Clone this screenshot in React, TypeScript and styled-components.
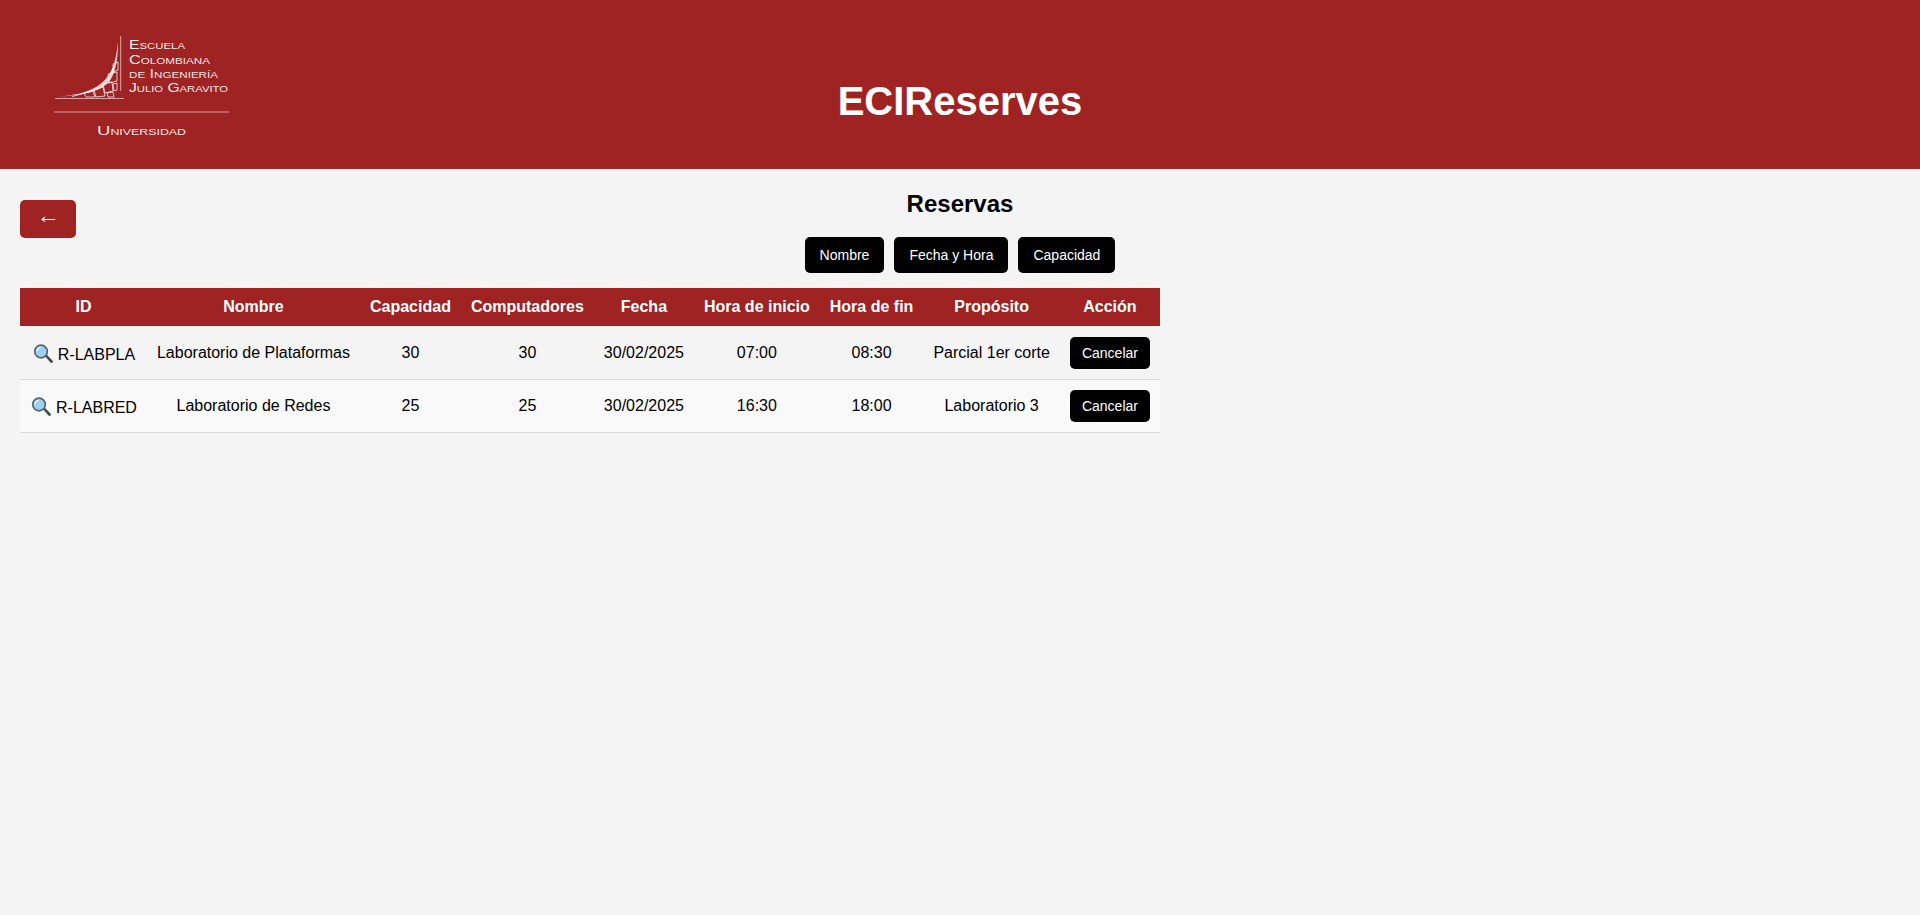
import React from "react";
import styled, { createGlobalStyle } from "styled-components";

const Global = createGlobalStyle`
  html, body { margin: 0; padding: 0; }
  body { background: #f4f4f4; color: #000; font-family: "Liberation Sans", Arial, sans-serif; min-height: 915px; }
`;

const Header = styled.header`
  background: #a02323;
  height: 169px;
  box-sizing: border-box;
  padding: 20px 30px 19px;
  display: grid;
  grid-template-columns: 1fr auto 1fr;
  color: #fff;
`;
const LogoSvg = styled.svg`
  display: block;
  width: 220px;
  height: 130px;
`;
const Brand = styled.h1`
  margin: 58px 0 0;
  font-size: 40px;
  line-height: 46px;
  font-weight: 700;
  color: #fff;
  align-self: start;
`;
const Main = styled.main`
  padding: 21px 20px 0;
`;
const Top = styled.div`
  display: grid;
  grid-template-columns: 1fr auto 1fr;
  align-items: start;
`;
const BackButton = styled.button`
  justify-self: start;
  margin-top: 10px;
  width: 56px;
  height: 38px;
  padding: 0 0 7px;
  background: #a02323;
  color: #fff;
  border: 0;
  border-radius: 5px;
  font: 23px "Liberation Sans", Arial, sans-serif;
`;
const Center = styled.div`
  display: flex;
  flex-direction: column;
  align-items: center;
`;
const Title = styled.h2`
  margin: 0;
  font-size: 24px;
  line-height: 27px;
  font-weight: 700;
`;
const Filters = styled.div`
  display: flex;
  gap: 10px;
  margin-top: 20px;
`;
const BlackButton = styled.button<{ $small?: boolean }>`
  background: #000;
  color: #fff;
  border: 0;
  border-radius: 5px;
  font: 14px "Liberation Sans", Arial, sans-serif;
  height: ${(p) => (p.$small ? 32 : 36)}px;
  padding: 0 ${(p) => (p.$small ? 12 : 15)}px;
  vertical-align: middle;
`;
const Table = styled.table`
  width: 1140px;
  margin-top: 15px;
  border-collapse: collapse;
  font-size: 16px;
`;
const Th = styled.th`
  background: #a02323;
  color: #fff;
  font-weight: 700;
  padding: 10px;
  line-height: 18px;
  text-align: center;
`;
const Td = styled.td`
  padding: 10px;
  height: 32px;
  text-align: center;
  border-bottom: 1px solid #ddd;
  line-height: 18px;
`;
const Tr = styled.tr`
  &:nth-child(even) { background: #f9f9f9; }
  &:first-child ${Td} { padding-top: 11px; }
`;
const Lens = styled.svg`
  width: 21px;
  height: 21px;
  vertical-align: -4px;
  margin-right: 5px;
`;

const Logo = () => (
  <LogoSvg viewBox="30 20 220 130" aria-label="Logo Escuela Colombiana de Ingeniería Julio Garavito">
    <g stroke="#fff" fill="none">
      <path d="M120.7 36V91" strokeOpacity=".6" strokeWidth="1" />
      <path d="M55 98.5H124" strokeOpacity=".6" strokeWidth="1" />
      <path d="M54 112H229" strokeOpacity=".55" strokeWidth="1" />
      <path d="M60 96.5C88 94 104 87 111 72C115 63 117 52 118 42C118 58 116 70 111 79C103 91 86 95 60 96.5Z" fill="#fff" fillOpacity=".8" stroke="none" />
      <g strokeWidth="1" strokeOpacity=".72">
        <path d="M72 96.5C92 92 106 84 113 68" />
        <path d="M113 64L118 62L118 70L113 72Z" />
        <path d="M108 74L117 72L117 81L109 83Z" />
        <path d="M103 84L112 82L113 91L105 93Z" />
        <path d="M94 90L103 87L105 96L96 97Z" />
        <path d="M84 93L93 91L95 97L86 97Z" />
        <path d="M113 84L117 83L117 90L114 91Z" />
        <path d="M107 93L113 92L114 97L108 97Z" />
      </g>
    </g>
    <g fill="#fff" fillOpacity=".92" fontFamily="'Liberation Sans', Arial, sans-serif" fontSize="12.5" style={{ fontVariant: "small-caps" }}>
      <text x="129" y="49" textLength="56" lengthAdjust="spacingAndGlyphs">Escuela</text>
      <text x="129" y="64" textLength="81" lengthAdjust="spacingAndGlyphs">Colombiana</text>
      <text x="129" y="78" textLength="89" lengthAdjust="spacingAndGlyphs">de Ingeniería</text>
      <text x="129" y="92" textLength="99" lengthAdjust="spacingAndGlyphs">Julio Garavito</text>
      <text x="97" y="135" textLength="89" lengthAdjust="spacingAndGlyphs" fontSize="13.5">Universidad</text>
    </g>
  </LogoSvg>
);

const Magnifier = () => (
  <Lens viewBox="-1 -0.5 20 20" aria-hidden="true">
    <path d="M11.5 12l1.6-1.4 5.4 5.5c.6.6.6 1.4 0 2-.6.5-1.3.5-1.9 0z" fill="#3f4a50" />
    <circle cx="7.6" cy="7.6" r="6" fill="#9fd0f2" stroke="#56646c" strokeWidth="1.6" />
    <path d="M3.8 7.4a3.8 3.8 0 0 1 3.6-3.6" fill="none" stroke="#e4f4fe" strokeWidth="1.4" />
  </Lens>
);

const rows = [
  ["R-LABPLA", "Laboratorio de Plataformas", "30", "30", "30/02/2025", "07:00", "08:30", "Parcial 1er corte"],
  ["R-LABRED", "Laboratorio de Redes", "25", "25", "30/02/2025", "16:30", "18:00", "Laboratorio 3"],
];
const heads = ["ID", "Nombre", "Capacidad", "Computadores", "Fecha", "Hora de inicio", "Hora de fin", "Propósito", "Acción"];

export default function App() {
  return (
    <>
      <Global />
      <Header>
        <Logo />
        <Brand>ECIReserves</Brand>
      </Header>
      <Main>
        <Top>
          <BackButton>←</BackButton>
          <Center>
            <Title>Reservas</Title>
            <Filters>
              <BlackButton>Nombre</BlackButton>
              <BlackButton>Fecha y Hora</BlackButton>
              <BlackButton>Capacidad</BlackButton>
            </Filters>
          </Center>
        </Top>
        <Table>
          <thead>
            <tr>{heads.map((h) => <Th key={h}>{h}</Th>)}</tr>
          </thead>
          <tbody>
            {rows.map((r) => (
              <Tr key={r[0]}>
                {r.map((c, i) => (
                  <Td key={i}>
                    {i === 0 && <Magnifier />}
                    {c}
                  </Td>
                ))}
                <Td><BlackButton $small>Cancelar</BlackButton></Td>
              </Tr>
            ))}
          </tbody>
        </Table>
      </Main>
    </>
  );
}
